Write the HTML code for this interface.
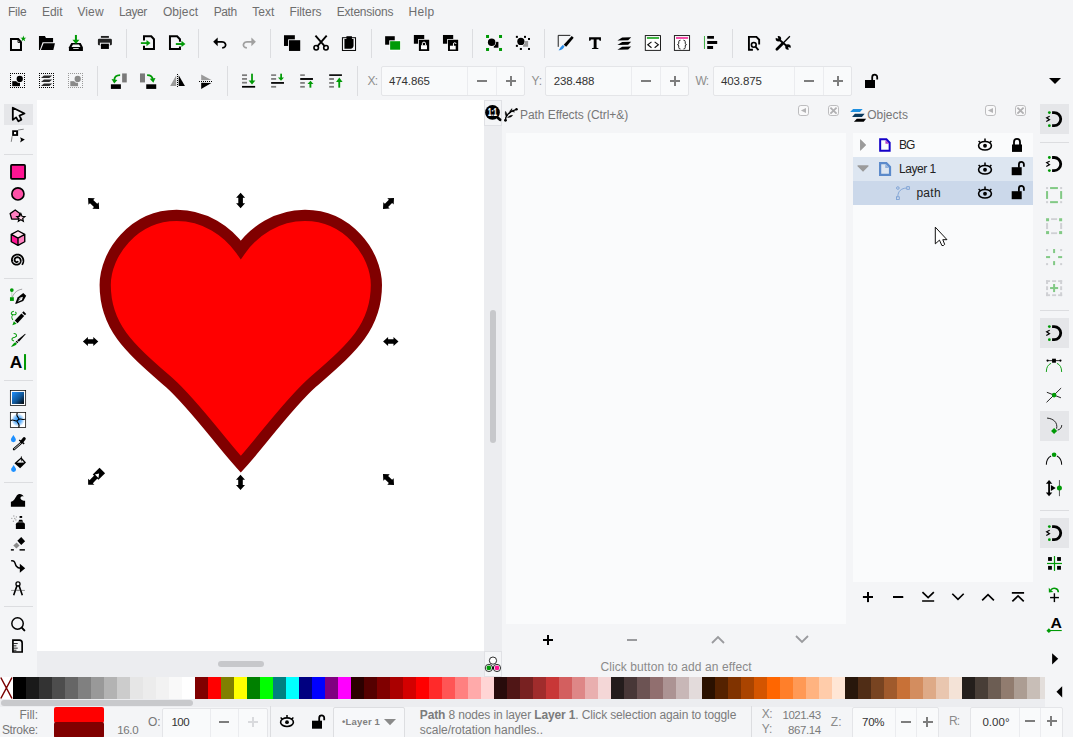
<!DOCTYPE html>
<html lang="en"><head><meta charset="utf-8"><title>Inkscape</title><style>
html,body{margin:0;padding:0}
body{width:1073px;height:737px;overflow:hidden;background:#f4f5f7;font-family:"Liberation Sans",sans-serif;position:relative}
.a{position:absolute;display:block}
.t{white-space:pre}
.pal i{display:block;flex:0 0 13px;height:22px}
.pal{overflow:hidden;display:flex !important;flex-wrap:nowrap}
</style></head>
<body>
<span class="a t" id="t_File_8_5_16" style="top:3.84px;font-size:12px;color:#6e6e6e;line-height:16px;left:7.90px;letter-spacing:-0.215px;">File</span>
<span class="a t" id="t_Edit_42_5_16" style="top:3.84px;font-size:12px;color:#6e6e6e;line-height:16px;left:41.90px;letter-spacing:0.004px;">Edit</span>
<span class="a t" id="t_View_78_16" style="top:3.84px;font-size:12px;color:#6e6e6e;line-height:16px;left:77.40px;letter-spacing:0.134px;">View</span>
<span class="a t" id="t_Layer_119_5_16" style="top:3.84px;font-size:12px;color:#6e6e6e;line-height:16px;left:118.90px;letter-spacing:-0.408px;">Layer</span>
<span class="a t" id="t_Object_163_5_16" style="top:3.84px;font-size:12px;color:#6e6e6e;line-height:16px;left:162.90px;letter-spacing:0.103px;">Object</span>
<span class="a t" id="t_Path_214_4_16" style="top:3.84px;font-size:12px;color:#6e6e6e;line-height:16px;left:213.80px;letter-spacing:-0.463px;">Path</span>
<span class="a t" id="t_Text_252_9_16" style="top:3.84px;font-size:12px;color:#6e6e6e;line-height:16px;left:252.30px;letter-spacing:0.028px;">Text</span>
<span class="a t" id="t_Filters_290_16" style="top:3.84px;font-size:12px;color:#6e6e6e;line-height:16px;left:289.40px;letter-spacing:-0.079px;">Filters</span>
<span class="a t" id="t_Extensions_337_4_16" style="top:3.84px;font-size:12px;color:#6e6e6e;line-height:16px;left:336.80px;letter-spacing:-0.234px;">Extensions</span>
<span class="a t" id="t_Help_409_16" style="top:3.84px;font-size:12px;color:#6e6e6e;line-height:16px;left:408.40px;letter-spacing:0.371px;">Help</span>
<div class="a" style="left:126px;top:29px;width:1px;height:29px;background:#dcdde0;"></div>
<div class="a" style="left:198px;top:29px;width:1px;height:29px;background:#dcdde0;"></div>
<div class="a" style="left:270px;top:29px;width:1px;height:29px;background:#dcdde0;"></div>
<div class="a" style="left:371px;top:29px;width:1px;height:29px;background:#dcdde0;"></div>
<div class="a" style="left:472px;top:29px;width:1px;height:29px;background:#dcdde0;"></div>
<div class="a" style="left:544px;top:29px;width:1px;height:29px;background:#dcdde0;"></div>
<div class="a" style="left:732px;top:29px;width:1px;height:29px;background:#dcdde0;"></div>
<div class="a" style="left:97px;top:66px;width:1px;height:30px;background:#dcdde0;"></div>
<div class="a" style="left:227px;top:66px;width:1px;height:30px;background:#dcdde0;"></div>
<div class="a" style="left:357px;top:66px;width:1px;height:30px;background:#dcdde0;"></div>
<span class="a t" id="t_X__368_85" style="top:72.84px;font-size:12px;color:#8e8e8e;line-height:16px;left:367.40px;letter-spacing:-0.544px;">X:</span>
<div class="a" style="left:381px;top:66px;width:144px;height:30px;background:#f9fafb;border:1px solid #e4e5e8;box-sizing:border-box;border-radius:2px;"></div>
<div class="a" style="left:467px;top:67px;width:1px;height:28px;background:#ebecef;"></div>
<div class="a" style="left:496px;top:67px;width:1px;height:28px;background:#ebecef;"></div>
<div class="a" style="left:477.0px;top:80px;width:10px;height:2px;background:#7d7d7d;"></div>
<div class="a" style="left:506.0px;top:80px;width:10px;height:2px;background:#7d7d7d;"></div>
<div class="a" style="left:510px;top:76px;width:2px;height:10px;background:#7d7d7d;"></div>
<span class="a t" id="t_474_865_389_7_85" style="top:73.02px;font-size:11.5px;color:#333;line-height:16px;left:389.10px;letter-spacing:-0.146px;">474.865</span>
<span class="a t" id="t_Y__532_85" style="top:72.84px;font-size:12px;color:#8e8e8e;line-height:16px;left:531.40px;letter-spacing:-0.088px;">Y:</span>
<div class="a" style="left:545px;top:66px;width:144px;height:30px;background:#f9fafb;border:1px solid #e4e5e8;box-sizing:border-box;border-radius:2px;"></div>
<div class="a" style="left:631px;top:67px;width:1px;height:28px;background:#ebecef;"></div>
<div class="a" style="left:660px;top:67px;width:1px;height:28px;background:#ebecef;"></div>
<div class="a" style="left:641.0px;top:80px;width:10px;height:2px;background:#7d7d7d;"></div>
<div class="a" style="left:670.0px;top:80px;width:10px;height:2px;background:#7d7d7d;"></div>
<div class="a" style="left:674px;top:76px;width:2px;height:10px;background:#7d7d7d;"></div>
<span class="a t" id="t_238_488_554_3_85" style="top:73.02px;font-size:11.5px;color:#333;line-height:16px;left:553.70px;letter-spacing:-0.146px;">238.488</span>
<span class="a t" id="t_W__696_85" style="top:72.84px;font-size:12px;color:#8e8e8e;line-height:16px;left:695.40px;letter-spacing:-0.753px;">W:</span>
<div class="a" style="left:713px;top:66px;width:139px;height:30px;background:#f9fafb;border:1px solid #e4e5e8;box-sizing:border-box;border-radius:2px;"></div>
<div class="a" style="left:794px;top:67px;width:1px;height:28px;background:#ebecef;"></div>
<div class="a" style="left:823px;top:67px;width:1px;height:28px;background:#ebecef;"></div>
<div class="a" style="left:804.0px;top:80px;width:10px;height:2px;background:#7d7d7d;"></div>
<div class="a" style="left:833.0px;top:80px;width:10px;height:2px;background:#7d7d7d;"></div>
<div class="a" style="left:837px;top:76px;width:2px;height:10px;background:#7d7d7d;"></div>
<span class="a t" id="t_403_875_721_7_85" style="top:73.02px;font-size:11.5px;color:#333;line-height:16px;left:721.10px;letter-spacing:-0.146px;">403.875</span>
<svg class="a" style="left:1048px;top:77px" width="14" height="8"><path d="M1 1h12l-6 6z" fill="#000"/></svg>
<div class="a" style="left:4px;top:104px;width:29px;height:21px;background:#e5e6e9;"></div>
<div class="a" style="left:4px;top:154px;width:29px;height:1px;background:#dcdde0;"></div>
<div class="a" style="left:4px;top:278px;width:29px;height:1px;background:#dcdde0;"></div>
<div class="a" style="left:4px;top:380px;width:29px;height:1px;background:#dcdde0;"></div>
<div class="a" style="left:4px;top:482px;width:29px;height:1px;background:#dcdde0;"></div>
<div class="a" style="left:4px;top:606px;width:29px;height:1px;background:#dcdde0;"></div>
<div class="a" style="left:37px;top:100px;width:447px;height:551px;background:#fff;"></div>
<div class="a" style="left:484px;top:100px;width:18px;height:577px;background:#ecedf0;"></div>
<div class="a" style="left:37px;top:651px;width:465px;height:26px;background:#ecedf0;"></div>
<div class="a" style="left:484px;top:100px;width:18px;height:26px;background:#f4f5f7;border:1px solid #e0e1e5;box-sizing:border-box;"></div>
<div class="a" style="left:490px;top:310px;width:6px;height:132.5px;background:#c7c8cb;border-radius:3px;"></div>
<div class="a" style="left:218px;top:661px;width:46.3px;height:6px;background:#c7c8cb;border-radius:3px;"></div>
<div class="a" style="left:484px;top:651px;width:18px;height:26px;background:#f4f5f7;border:1px solid #e0e1e5;box-sizing:border-box;"></div>
<svg class="a" style="left:37px;top:100px" width="447" height="551" viewBox="37 100 447 551"><path d="M240.8,464.2 C221.5,443.4 194.5,405.3 169.6,382.9 C131.6,349.5 105.2,328.4 105.2,285.0 C105.2,253.4 133.9,215.4 176.6,215.4 C205.0,215.4 227.6,231.1 240.8,249.8 C254.0,231.1 276.6,215.4 305.0,215.4 C347.7,215.4 376.4,253.4 376.4,285.0 C376.4,328.4 350.0,349.5 312.0,382.9 C287.1,405.3 260.1,443.4 240.8,464.2 Z" fill="#ff0000" stroke="#800000" stroke-width="11.2" stroke-miterlimit="10"/></svg>
<span class="a t" id="t_pe" style="top:106.84px;font-size:12px;color:#777;line-height:16px;left:520.00px;letter-spacing:-0.064px;">Path Effects (Ctrl+&amp;)</span>
<svg class="a" style="left:798px;top:105px" width="11" height="11"><rect x="0.5" y="0.5" width="10" height="10" rx="2.3" fill="#f9f9fa" stroke="#b6b6b8" stroke-width="0.9"/><path d="M8 3.1v4.9L2.9 5.5z" fill="#b4b4b6"/></svg>
<svg class="a" style="left:828px;top:105px" width="11" height="11"><rect x="0.5" y="0.5" width="10" height="10" rx="2.3" fill="#f9f9fa" stroke="#b6b6b8" stroke-width="0.9"/><path d="M2.4 2.6l6.2 6M8.6 2.6l-6.2 6" stroke="#b0b0b2" stroke-width="1.8" fill="none"/></svg>
<div class="a" style="left:506px;top:133px;width:340px;height:491px;background:#fafbfc;"></div>
<div class="a" style="left:542.5px;top:639.0px;width:10px;height:2px;background:#000;"></div>
<div class="a" style="left:546.5px;top:635px;width:2px;height:10px;background:#000;"></div>
<div class="a" style="left:627px;top:639px;width:10px;height:2px;background:#9a9b9e;"></div>
<svg class="a" style="left:710px;top:634px" width="16" height="12"><path d="M2 9l6-6 6 6" fill="none" stroke="#9a9b9e" stroke-width="1.8"/></svg>
<svg class="a" style="left:794px;top:633px" width="16" height="12"><path d="M2 3l6 6 6-6" fill="none" stroke="#9a9b9e" stroke-width="1.8"/></svg>
<span class="a t" id="t_click" style="top:658.84px;font-size:12px;color:#8a8a8a;line-height:16px;left:600.40px;letter-spacing:0.095px;">Click button to add an effect</span>
<span class="a t" id="t_Objects_867_8_119" style="top:106.84px;font-size:12px;color:#777;line-height:16px;left:867.20px;letter-spacing:0.002px;">Objects</span>
<svg class="a" style="left:985px;top:105px" width="11" height="11"><rect x="0.5" y="0.5" width="10" height="10" rx="2.3" fill="#f9f9fa" stroke="#b6b6b8" stroke-width="0.9"/><path d="M8 3.1v4.9L2.9 5.5z" fill="#b4b4b6"/></svg>
<svg class="a" style="left:1015px;top:105px" width="11" height="11"><rect x="0.5" y="0.5" width="10" height="10" rx="2.3" fill="#f9f9fa" stroke="#b6b6b8" stroke-width="0.9"/><path d="M2.4 2.6l6.2 6M8.6 2.6l-6.2 6" stroke="#b0b0b2" stroke-width="1.8" fill="none"/></svg>
<div class="a" style="left:853px;top:133px;width:180px;height:448.6px;background:#fafbfc;"></div>
<div class="a" style="left:853px;top:157px;width:180px;height:24px;background:#dde6f1;"></div>
<div class="a" style="left:853px;top:181px;width:180px;height:24px;background:#cbd8ea;"></div>
<svg class="a" style="left:859px;top:138px" width="8" height="14"><path d="M1.2 1.2v11.6L7 7z" fill="#9b9b9b"/></svg>
<svg class="a" style="left:856px;top:164px" width="14" height="8"><path d="M1.2 1.2h11.6L7 7z" fill="#9b9b9b"/></svg>
<span class="a t" id="t_BG_899_6_149" style="top:136.84px;font-size:12px;color:#222;line-height:16px;left:899.00px;letter-spacing:-1.100px;">BG</span>
<span class="a t" id="t_Layer_1_899_6_173" style="top:160.84px;font-size:12px;color:#222;line-height:16px;left:899.00px;letter-spacing:-0.472px;">Layer 1</span>
<span class="a t" id="t_path_917_197" style="top:184.84px;font-size:12px;color:#222;line-height:16px;left:916.40px;letter-spacing:0.280px;">path</span>
<div class="a" style="left:863px;top:596.0px;width:10px;height:2px;background:#000;"></div>
<div class="a" style="left:867.0px;top:592px;width:2px;height:10px;background:#000;"></div>
<div class="a" style="left:893px;top:596px;width:10px;height:2px;background:#000;"></div>
<div class="a" style="left:1040px;top:104px;width:29px;height:30px;background:#e5e6e9;"></div>
<div class="a" style="left:1040px;top:318px;width:29px;height:30px;background:#e5e6e9;"></div>
<div class="a" style="left:1040px;top:411px;width:29px;height:30px;background:#e5e6e9;"></div>
<div class="a" style="left:1040px;top:518px;width:29px;height:30px;background:#e5e6e9;"></div>
<div class="a" style="left:1040px;top:142px;width:29px;height:1px;background:#dcdde0;"></div>
<div class="a" style="left:1040px;top:310px;width:29px;height:1px;background:#dcdde0;"></div>
<div class="a" style="left:1040px;top:510px;width:29px;height:1px;background:#dcdde0;"></div>
<div class="a" style="left:0px;top:676.5px;width:1045px;height:30px;background:#ecedf0;"></div>
<div class="a pal" style="left:13px;top:677px;width:1032px;height:22px"><i style="background:#000000"></i><i style="background:#1a1a1a"></i><i style="background:#333333"></i><i style="background:#4d4d4d"></i><i style="background:#666666"></i><i style="background:#808080"></i><i style="background:#999999"></i><i style="background:#b3b3b3"></i><i style="background:#cccccc"></i><i style="background:#e6e6e6"></i><i style="background:#ececec"></i><i style="background:#f2f2f2"></i><i style="background:#f9f9f9"></i><i style="background:#ffffff"></i><i style="background:#800000"></i><i style="background:#ff0000"></i><i style="background:#808000"></i><i style="background:#ffff00"></i><i style="background:#008000"></i><i style="background:#00ff00"></i><i style="background:#008080"></i><i style="background:#00ffff"></i><i style="background:#000080"></i><i style="background:#0000ff"></i><i style="background:#800080"></i><i style="background:#ff00ff"></i><i style="background:#2b0000"></i><i style="background:#550000"></i><i style="background:#800000"></i><i style="background:#aa0000"></i><i style="background:#d40000"></i><i style="background:#ff0000"></i><i style="background:#ff2a2a"></i><i style="background:#ff5555"></i><i style="background:#ff8080"></i><i style="background:#ffaaaa"></i><i style="background:#ffd5d5"></i><i style="background:#280b0b"></i><i style="background:#501616"></i><i style="background:#782121"></i><i style="background:#a02c2c"></i><i style="background:#c83737"></i><i style="background:#d35f5f"></i><i style="background:#de8787"></i><i style="background:#e9afaf"></i><i style="background:#f4d7d7"></i><i style="background:#241c1c"></i><i style="background:#483737"></i><i style="background:#6c5353"></i><i style="background:#916f6f"></i><i style="background:#ac9393"></i><i style="background:#c8b7b7"></i><i style="background:#e3dbdb"></i><i style="background:#2b1100"></i><i style="background:#552200"></i><i style="background:#803300"></i><i style="background:#aa4400"></i><i style="background:#d45500"></i><i style="background:#ff6600"></i><i style="background:#ff7f2a"></i><i style="background:#ff9955"></i><i style="background:#ffb380"></i><i style="background:#ffccaa"></i><i style="background:#ffe6d5"></i><i style="background:#28170b"></i><i style="background:#502d16"></i><i style="background:#784421"></i><i style="background:#a05a2c"></i><i style="background:#c87137"></i><i style="background:#d38d5f"></i><i style="background:#deaa87"></i><i style="background:#e9c6af"></i><i style="background:#f4e3d7"></i><i style="background:#241f1c"></i><i style="background:#483e37"></i><i style="background:#6c5d53"></i><i style="background:#917c6f"></i><i style="background:#ac9d93"></i><i style="background:#c8beb7"></i><i style="background:#e3dedb"></i></div>
<svg class="a" style="left:0;top:677px" width="13" height="22"><rect width="13" height="22" fill="#fff"/><path d="M0.8 0.5L12 21.5M12 0.5L0.8 21.5" stroke="#7a0000" stroke-width="1.5"/></svg>
<div class="a" style="left:1px;top:700px;width:192px;height:6px;background:#c8c9cc;border-radius:3px;"></div>
<span class="a t" id="t_Fill__20_719" style="top:706.84px;font-size:12px;color:#777;line-height:16px;left:19.40px;letter-spacing:0.007px;">Fill:</span>
<span class="a t" id="t_Stroke__2_5_734" style="top:721.84px;font-size:12px;color:#777;line-height:16px;left:1.90px;letter-spacing:-0.303px;">Stroke:</span>
<div class="a" style="left:54px;top:707px;width:50px;height:15.5px;background:#ff0000;border-radius:2px;"></div>
<div class="a" style="left:54px;top:722px;width:50px;height:16px;background:#800000;border-radius:2px;"></div>
<span class="a t" id="t_16_0_117_8_734" style="top:722.02px;font-size:11.5px;color:#777;line-height:16px;left:117.20px;letter-spacing:-0.330px;">16.0</span>
<span class="a t" id="t_O__148_5_726" style="top:713.84px;font-size:12px;color:#777;line-height:16px;left:147.90px;letter-spacing:0.028px;">O:</span>
<div class="a" style="left:162px;top:707.5px;width:105.5px;height:37.5px;background:#f9fafb;border:1px solid #e4e5e8;box-sizing:border-box;border-radius:2px;"></div>
<div class="a" style="left:209.5px;top:708.5px;width:1px;height:35.5px;background:#ebecef;"></div>
<div class="a" style="left:238px;top:708.5px;width:1px;height:35.5px;background:#ebecef;"></div>
<div class="a" style="left:219.25px;top:721px;width:10px;height:2px;background:#7d7d7d;"></div>
<div class="a" style="left:248.25px;top:721px;width:10px;height:2px;background:#d9dadd;"></div>
<div class="a" style="left:252px;top:717px;width:2px;height:10px;background:#d9dadd;"></div>
<span class="a t" id="t_100_172_726" style="top:714.02px;font-size:11.5px;color:#333;line-height:16px;left:171.40px;letter-spacing:-0.494px;">100</span>
<div class="a" style="left:270px;top:706px;width:1px;height:31px;background:#dcdde0;"></div>
<div class="a" style="left:332.5px;top:707px;width:72px;height:40px;background:#f7f8fa;border:1px solid #dddee1;box-sizing:border-box;border-radius:2px;"></div>
<span class="a t" id="t_layersel" style="top:713.91px;font-size:9.5px;color:#808080;line-height:16px;left:342.00px;font-weight:bold;letter-spacing:0.184px;">•Layer 1</span>
<svg class="a" style="left:383px;top:718px" width="14" height="8"><path d="M1 1h12l-6 6.3z" fill="#8a8a8a"/></svg>
<span class="a t" id="t_status1" style="top:706.64px;font-size:12px;color:#7b7b7b;line-height:16px;left:419.80px;letter-spacing:-0.137px;"><b>Path</b> 8 nodes in layer <b>Layer 1</b>. Click selection again to toggle</span>
<span class="a t" id="t_status2" style="top:721.64px;font-size:12px;color:#7b7b7b;line-height:16px;left:419.80px;letter-spacing:-0.010px;">scale/rotation handles..</span>
<div class="a" style="left:751px;top:706px;width:1px;height:31px;background:#dcdde0;"></div>
<span class="a t" id="t_cx" style="top:706.34px;font-size:12px;color:#8a8a8a;line-height:16px;left:761.80px;letter-spacing:-0.544px;">X:</span>
<span class="a t" id="t_cy" style="top:721.34px;font-size:12px;color:#8a8a8a;line-height:16px;left:761.80px;letter-spacing:-0.088px;">Y:</span>
<span class="a t" id="t_1021_43_783_2_718_5" style="top:706.52px;font-size:11.5px;color:#7b7b7b;line-height:16px;left:782.60px;letter-spacing:-0.513px;">1021.43</span>
<span class="a t" id="t_867_14_788_5_733_5" style="top:721.52px;font-size:11.5px;color:#7b7b7b;line-height:16px;left:787.90px;letter-spacing:-0.397px;">867.14</span>
<span class="a t" id="t_Z__831_3_726" style="top:713.84px;font-size:12px;color:#8a8a8a;line-height:16px;left:830.70px;letter-spacing:0.228px;">Z:</span>
<div class="a" style="left:852px;top:707.3px;width:86.5px;height:37.700000000000045px;background:#f9fafb;border:1px solid #e4e5e8;box-sizing:border-box;border-radius:2px;"></div>
<div class="a" style="left:894.5px;top:708.3px;width:1px;height:35.700000000000045px;background:#ebecef;"></div>
<div class="a" style="left:915.5px;top:708.3px;width:1px;height:35.700000000000045px;background:#ebecef;"></div>
<div class="a" style="left:900.5px;top:721px;width:10px;height:2px;background:#7d7d7d;"></div>
<div class="a" style="left:922.5px;top:721px;width:10px;height:2px;background:#7d7d7d;"></div>
<div class="a" style="left:926px;top:717px;width:2px;height:10px;background:#7d7d7d;"></div>
<span class="a t" id="t_70__862_6_726" style="top:714.02px;font-size:11.5px;color:#333;line-height:16px;left:862.00px;letter-spacing:-0.216px;">70%</span>
<span class="a t" id="t_R__949_7_725_5" style="top:713.34px;font-size:12px;color:#8a8a8a;line-height:16px;left:949.10px;letter-spacing:-1.100px;">R:</span>
<div class="a" style="left:969.5px;top:707.3px;width:93.0px;height:37.700000000000045px;background:#f9fafb;border:1px solid #e4e5e8;box-sizing:border-box;border-radius:2px;"></div>
<div class="a" style="left:1018.5px;top:708.3px;width:1px;height:35.700000000000045px;background:#ebecef;"></div>
<div class="a" style="left:1039.5px;top:708.3px;width:1px;height:35.700000000000045px;background:#ebecef;"></div>
<div class="a" style="left:1024.5px;top:720px;width:10px;height:2px;background:#7d7d7d;"></div>
<div class="a" style="left:1046.5px;top:720px;width:10px;height:2px;background:#7d7d7d;"></div>
<div class="a" style="left:1050px;top:716px;width:2px;height:10px;background:#7d7d7d;"></div>
<span class="a t" id="t_0_00__983_725_5" style="top:713.52px;font-size:11.5px;color:#333;line-height:16px;left:982.40px;letter-spacing:0.054px;">0.00°</span>
<svg class="a" style="left:0;top:0" width="1073" height="737" viewBox="0 0 1073 737"><g transform="translate(0 0) scale(0.12488)"><path d="M88,313 H146 L168,337 V400 H88 Z" fill="none" stroke="#000" stroke-width="16" /><path d="M144,311 V340 H170" fill="none" stroke="#000" stroke-width="7" /><polygon points="187.0,285.0 192.9,301.9 210.8,302.3 196.5,313.1 201.7,330.2 187.0,320.0 172.3,330.2 177.5,313.1 163.2,302.3 181.1,301.9" fill="#009a06" /><polygon points="312,288 360,288 368,305 425,305 425,338 341,338 319,400 312,400" fill="#000" /><polygon points="349,346 440,346 427,400 327,400" fill="#000" /><polygon points="571,345 646,345 664,378 664,408 552,408 552,378" fill="#000" /><polygon points="584,356 633,356 644,376 573,376" fill="#f4f5f7" /><rect x="586" y="385" width="44" height="7" fill="#f4f5f7" /><rect x="600" y="280" width="16" height="46" fill="#009a06" /><polygon points="580,318 636,318 608,352" fill="#009a06" /><rect x="808" y="288" width="64" height="15" fill="#222" /><rect x="784" y="310" width="112" height="52" fill="#222" rx="10"/><rect x="800" y="342" width="80" height="22" fill="#f4f5f7" /><rect x="808" y="350" width="64" height="42" fill="#000" /><path d="M80 588h8M80 700h8M96 588h8M96 700h8M112 588h8M112 700h8M128 588h8M128 700h8M144 588h8M144 700h8M160 588h8M160 700h8M176 588h8M176 700h8M192 588h8M192 700h8M80 604h8M192 604h8M80 620h8M192 620h8M80 636h8M192 636h8M80 652h8M192 652h8M80 668h8M192 668h8M80 684h8M192 684h8" fill="none" stroke="#000" stroke-width="8" shape-rendering="crispEdges"/><rect x="98" y="650" width="62" height="40" fill="#000" /><circle cx="158" cy="632" r="25" fill="#000" stroke="#f4f5f7" stroke-width="12" paint-order="stroke"/><path d="M312 588h8M312 700h8M328 588h8M328 700h8M344 588h8M344 700h8M360 588h8M360 700h8M376 588h8M376 700h8M392 588h8M392 700h8M408 588h8M408 700h8M424 588h8M424 700h8M312 604h8M424 604h8M312 620h8M424 620h8M312 636h8M424 636h8M312 652h8M424 652h8M312 668h8M424 668h8M312 684h8M424 684h8" fill="none" stroke="#000" stroke-width="8" shape-rendering="crispEdges"/><polygon points="352,605 418,605 395,625 328,625" fill="#2a2a2a" /><polygon points="352,636 418,636 395,656 328,656" fill="#2a2a2a" /><polygon points="352,668 418,668 395,688 328,688" fill="#2a2a2a" /><path d="M544 588h8M544 700h8M560 588h8M560 700h8M576 588h8M576 700h8M592 588h8M592 700h8M608 588h8M608 700h8M624 588h8M624 700h8M640 588h8M640 700h8M656 588h8M656 700h8M544 604h8M656 604h8M544 620h8M656 620h8M544 636h8M656 636h8M544 652h8M656 652h8M544 668h8M656 668h8M544 684h8M656 684h8" fill="none" stroke="#999" stroke-width="8" shape-rendering="crispEdges"/><rect x="563" y="650" width="62" height="40" fill="#8a8a8a" /><circle cx="622" cy="632" r="25" fill="#8a8a8a" stroke="#f4f5f7" stroke-width="12" paint-order="stroke"/><rect x="978" y="588" width="37" height="72" fill="#7a7a7a" /><rect x="888" y="675" width="80" height="37" fill="#000" /><path d="M962,602 C930,602 915,622 915,645" fill="none" stroke="#009a06" stroke-width="14" /><polygon points="893,632 940,640 915,668" fill="#009a06" /></g>
<g transform="translate(134 0) scale(0.12488)"><path d="M80,324 V290 H138 L160,314 V392 H80 V366" fill="none" stroke="#000" stroke-width="16" /><rect x="55" y="338" width="53" height="14" fill="#009a06" /><polygon points="100,320 132,345 100,370" fill="#009a06" /><path d="M368,334 V314 L345,290 H288 V392 H368 V372" fill="none" stroke="#000" stroke-width="16" /><rect x="335" y="345" width="53" height="15" fill="#009a06" /><polygon points="380,327 412,352 380,377" fill="#009a06" /><path d="M655,335 H705 C730,335 740,358 730,372 C724,380 716,383 706,384" fill="none" stroke="#000" stroke-width="14" /><polygon points="634,335 670,300 670,370" fill="#000" /><path d="M955,335 H905 C880,335 870,358 880,372 C886,380 894,383 904,384" fill="none" stroke="#a0a0a0" stroke-width="14" /><polygon points="976,335 940,300 940,370" fill="#a0a0a0" /><rect x="48" y="588" width="40" height="72" fill="#7a7a7a" /><rect x="98" y="675" width="80" height="37" fill="#000" /><path d="M105,602 C135,602 150,620 150,642" fill="none" stroke="#009a06" stroke-width="14" /><polygon points="126,630 172,624 155,662" fill="#009a06" /><polygon points="290,688 338,688 338,602" fill="#9a9a9a" /><polygon points="358,602 358,688 408,688" fill="#000" /><path d="M348,592 V706" fill="none" stroke="#000" stroke-width="8" stroke-dasharray="8 8" shape-rendering="crispEdges"/><polygon points="538,596 620,640 538,642" fill="#9a9a9a" /><polygon points="538,662 620,664 538,712" fill="#000" /><path d="M520,652 H636" fill="none" stroke="#000" stroke-width="8" stroke-dasharray="8 8" shape-rendering="crispEdges"/><rect x="865" y="595" width="40" height="14" fill="#7a7a7a" /><rect x="865" y="625" width="40" height="14" fill="#7a7a7a" /><rect x="865" y="655" width="40" height="14" fill="#7a7a7a" /><rect x="865" y="688" width="105" height="14" fill="#000" /><rect x="938" y="590" width="14" height="60" fill="#009a06" /><polygon points="918,645 972,645 945,676" fill="#009a06" /></g>
<g transform="translate(268 0) scale(0.12488)"><rect x="128" y="282" width="87" height="86" fill="#000" /><rect x="168" y="322" width="90" height="86" fill="#000" stroke="#f4f5f7" stroke-width="14" paint-order="stroke"/><path d="M380,286 L457,374 M470,286 L393,374" fill="none" stroke="#000" stroke-width="15" /><circle cx="386" cy="382" r="18" fill="none" stroke="#000" stroke-width="13"/><circle cx="464" cy="382" r="18" fill="none" stroke="#000" stroke-width="13"/><rect x="596" y="302" width="105" height="102" fill="#f4f5f7" stroke="#000" stroke-width="8"/><rect x="628" y="290" width="44" height="24" fill="#000" /><path d="M612,312 H685 V365 Q685,390 660,390 H612 Z" fill="#000" stroke="none" stroke-width="0" /><rect x="938" y="290" width="77" height="68" fill="#000" /><rect x="978" y="330" width="80" height="68" fill="#009a06" stroke="#fff" stroke-width="14" paint-order="stroke"/><rect x="25" y="595" width="40" height="13" fill="#7a7a7a" /><rect x="25" y="625" width="40" height="14" fill="#7a7a7a" /><rect x="25" y="688" width="40" height="14" fill="#7a7a7a" /><rect x="25" y="657" width="103" height="14" fill="#000" /><rect x="98" y="590" width="14" height="36" fill="#009a06" /><polygon points="80,620 128,620 104,646" fill="#009a06" /><rect x="258" y="595" width="37" height="13" fill="#7a7a7a" /><rect x="258" y="657" width="37" height="14" fill="#7a7a7a" /><rect x="258" y="688" width="37" height="14" fill="#7a7a7a" /><rect x="258" y="625" width="102" height="15" fill="#000" /><rect x="332" y="668" width="15" height="34" fill="#009a06" /><polygon points="316,673 364,673 340,647" fill="#009a06" /><rect x="490" y="595" width="102" height="13" fill="#000" /><rect x="490" y="625" width="38" height="15" fill="#7a7a7a" /><rect x="490" y="657" width="38" height="14" fill="#7a7a7a" /><rect x="490" y="688" width="38" height="14" fill="#7a7a7a" /><rect x="563" y="650" width="15" height="52" fill="#009a06" /><polygon points="545,656 597,656 571,621" fill="#009a06" /></g>
<g transform="translate(402 20) scale(0.12488)"><rect x="95" y="120" width="83" height="70" fill="#000" /><rect x="135" y="158" width="83" height="90" fill="#000" stroke="#fff" stroke-width="12" paint-order="stroke"/><rect x="152" y="202" width="48" height="32" fill="#fff" /><path d="M163,204 V190 A13,13 0 0 1 189,190 V204" fill="none" stroke="#fff" stroke-width="8" /><rect x="328" y="120" width="82" height="70" fill="#000" /><rect x="368" y="158" width="82" height="90" fill="#000" stroke="#fff" stroke-width="12" paint-order="stroke"/><rect x="384" y="206" width="46" height="30" fill="#fff" /><path d="M412,208 V192 A10,10 0 0 1 432,192" fill="none" stroke="#fff" stroke-width="8" /><rect x="673" y="120" width="24" height="24" fill="#009a06" /><rect x="777" y="120" width="24" height="24" fill="#009a06" /><rect x="673" y="224" width="24" height="24" fill="#009a06" /><rect x="777" y="224" width="24" height="24" fill="#009a06" /><rect x="735" y="175" width="37" height="47" fill="#000" /><circle cx="718" cy="178" r="30" fill="#000" stroke="#fff" stroke-width="12" paint-order="stroke"/><polygon points="978,168 1010,168 1010,215 968,215" fill="#9a9a9a" /><circle cx="952" cy="172" r="29" fill="#000" stroke="#fff" stroke-width="10" paint-order="stroke"/><rect x="912" y="127" width="16" height="16" fill="#000" /><rect x="977" y="127" width="16" height="16" fill="#000" /><rect x="912" y="199" width="16" height="16" fill="#000" /><rect x="1009" y="144" width="16" height="16" fill="#000" /><rect x="944" y="224" width="16" height="16" fill="#000" /><rect x="1009" y="224" width="16" height="16" fill="#000" /></g>
<g transform="translate(536 20) scale(0.12488)"><path d="M178,215 V123 H275" fill="none" stroke="#000" stroke-width="7" /><polygon points="286,128 302,142 242,214 222,198" fill="#000" /><path d="M228,208 C226,226 205,243 180,242 C190,233 196,214 214,200 Z" fill="#2b8de8" stroke="none" stroke-width="0" /><polygon points="425,138 520,138 520,166 510,166 505,156 485,156 485,222 500,226 500,233 448,233 448,226 462,222 462,156 440,156 435,166 425,166" fill="#000" /><polygon points="690,140 762,138 738,162 652,164" fill="#000" /><polygon points="690,177 762,175 738,199 652,201" fill="#000" /><polygon points="690,214 762,212 738,236 652,238" fill="#000" /><rect x="875" y="125" width="122" height="118" fill="#fff" stroke="#000" stroke-width="7"/><rect x="888" y="138" width="97" height="12" fill="#009a06" /><path d="M925,175 L895,198 L925,222 M950,175 L980,198 L950,222" fill="none" stroke="#111" stroke-width="9" /></g>
<g transform="translate(670 20) scale(0.12488)"><rect x="35" y="125" width="122" height="118" fill="#fff" stroke="#000" stroke-width="7"/><rect x="48" y="138" width="97" height="12" fill="#f0148c" /><path d="M84,162 Q70,162 70,174 V186 Q70,196 60,197 Q70,198 70,208 V220 Q70,232 84,232" fill="none" stroke="#222" stroke-width="8" /><path d="M108,162 Q122,162 122,174 V186 Q122,196 132,197 Q122,198 122,208 V220 Q122,232 108,232" fill="none" stroke="#222" stroke-width="8" /><rect x="272" y="128" width="6" height="104" fill="#009a06" /><rect x="298" y="128" width="54" height="22" fill="#000" /><rect x="298" y="168" width="80" height="24" fill="#000" /><rect x="298" y="208" width="47" height="24" fill="#000" /><path d="M664,238 H632 V135 H692 L714,158 V196" fill="none" stroke="#000" stroke-width="15" /><circle cx="671" cy="199" r="19" fill="none" stroke="#000" stroke-width="13"/><path d="M686,216 L709,241" fill="none" stroke="#000" stroke-width="15" /><path d="M960,130 L905,186" fill="none" stroke="#000" stroke-width="11" /><path d="M900,190 L856,234" fill="none" stroke="#000" stroke-width="22" stroke-linecap="round"/><path d="M880,162 L935,208" fill="none" stroke="#000" stroke-width="16" /><circle cx="868" cy="150" r="22" fill="#000" /><polygon points="868,150 836,140 858,118" fill="#f4f5f7" /><circle cx="945" cy="216" r="22" fill="#000" /><polygon points="945,216 977,226 955,248" fill="#f4f5f7" /></g>
<g transform="translate(865 80)"><rect x="0" y="0" width="10" height="8" fill="#000"/><path d="M7.2,0.5 V-2.8 A2.5,2.5 0 0 1 12.2,-2.8 V-0.4" fill="none" stroke="#000" stroke-width="1.8"/></g>
<g transform="translate(1012 144.5)"><rect x="0" y="0" width="10" height="7.4" fill="#000"/><path d="M2,0.5 V-2.6 A3,3 0 0 1 8,-2.6 V0.5" fill="none" stroke="#000" stroke-width="1.8"/></g>
<g transform="translate(1011.7 167.2)"><rect x="0" y="0" width="10" height="8" fill="#000"/><path d="M7.2,0.5 V-2.8 A2.5,2.5 0 0 1 12.2,-2.8 V-0.4" fill="none" stroke="#000" stroke-width="1.8"/></g>
<g transform="translate(1011.7 191.2)"><rect x="0" y="0" width="10" height="8" fill="#000"/><path d="M7.2,0.5 V-2.8 A2.5,2.5 0 0 1 12.2,-2.8 V-0.4" fill="none" stroke="#000" stroke-width="1.8"/></g>
<g transform="translate(985 145.75)"><ellipse cx="0" cy="0" rx="6.4" ry="4.3" fill="none" stroke="#000" stroke-width="1.6"/><circle cx="0" cy="0" r="1.9" fill="#000"/><path d="M0,-7.3 V-4.2 M-6.4,-4.7 L-4.3,-2.7 M6.4,-4.7 L4.3,-2.7" stroke="#000" stroke-width="1.5" fill="none"/></g>
<g transform="translate(985 169.75)"><ellipse cx="0" cy="0" rx="6.4" ry="4.3" fill="none" stroke="#000" stroke-width="1.6"/><circle cx="0" cy="0" r="1.9" fill="#000"/><path d="M0,-7.3 V-4.2 M-6.4,-4.7 L-4.3,-2.7 M6.4,-4.7 L4.3,-2.7" stroke="#000" stroke-width="1.5" fill="none"/></g>
<g transform="translate(985 193.75)"><ellipse cx="0" cy="0" rx="6.4" ry="4.3" fill="none" stroke="#000" stroke-width="1.6"/><circle cx="0" cy="0" r="1.9" fill="#000"/><path d="M0,-7.3 V-4.2 M-6.4,-4.7 L-4.3,-2.7 M6.4,-4.7 L4.3,-2.7" stroke="#000" stroke-width="1.5" fill="none"/></g>
<g transform="translate(287 722.2)"><ellipse cx="0" cy="0" rx="6.4" ry="4.3" fill="none" stroke="#000" stroke-width="1.6"/><circle cx="0" cy="0" r="1.9" fill="#000"/><path d="M0,-7.3 V-4.2 M-6.4,-4.7 L-4.3,-2.7 M6.4,-4.7 L4.3,-2.7" stroke="#000" stroke-width="1.5" fill="none"/></g>
<g transform="translate(312 720.7)"><rect x="0" y="0" width="10" height="8" fill="#000"/><path d="M7.2,0.5 V-2.8 A2.5,2.5 0 0 1 12.2,-2.8 V-0.4" fill="none" stroke="#000" stroke-width="1.8"/></g>
<g transform="translate(0 100) scale(0.06244)"><path d="M205,124 V318 L258,278 L295,340 L342,314 L312,250 L392,216 Z" fill="#f4f5f7" stroke="#000" stroke-width="29" stroke-linejoin="round"/><rect x="195" y="485" width="95" height="90" fill="#000" /><rect x="225" y="513" width="33" height="34" fill="#fff" /><path d="M290,480 L380,468 M195,580 L180,670" fill="none" stroke="#111" stroke-width="8" /><polygon points="322,595 398,632 322,682 336,638" fill="#000" /></g>
<g transform="translate(0 158) scale(0.06244)"><rect x="176" y="112" width="225" height="224" fill="#ff1493" stroke="#000" stroke-width="28" rx="14"/><circle cx="287" cy="575" r="97" fill="#ff50a8" stroke="#000" stroke-width="26"/></g>
<g transform="translate(0 204) scale(0.09229)"><polygon points="165,65 216,102 197,163 126,163 110,104" fill="#ff80c0" stroke="#000" stroke-width="14" stroke-linejoin="round"/><polygon points="226.0,104.0 238.3,133.0 269.7,135.8 246.0,156.5 253.0,187.2 226.0,171.0 199.0,187.2 206.0,156.5 182.3,135.8 213.7,133.0" fill="#ffd9e8" stroke="#000" stroke-width="13" stroke-linejoin="miter" stroke-miterlimit="3"/><polygon points="195,292 266,330 195,370 124,330" fill="#ffe0ec" /><polygon points="124,330 195,370 195,446 124,408" fill="#ff1493" /><polygon points="266,330 195,370 195,446 266,408" fill="#ff80c0" /><path d="M195,290 L268,329 V409 L195,448 L122,409 V329 Z M122,329 L195,370 L268,329 M195,370 V448" fill="none" stroke="#000" stroke-width="15" stroke-linejoin="round"/><path d="M238.7,657.6 L242.4,652.2 L245.6,646.6 L248.3,640.8 L250.4,634.7 L251.9,628.6 L252.9,622.3 L253.3,616.1 L253.2,609.8 L252.5,603.7 L251.2,597.6 L249.4,591.8 L247.2,586.1 L244.4,580.7 L241.2,575.6 L237.5,570.9 L233.5,566.5 L229.1,562.6 L224.4,559.0 L219.5,556.0 L214.3,553.4 L208.9,551.3 L203.4,549.7 L197.9,548.6 L192.2,548.0 L186.6,547.9 L181.1,548.3 L175.6,549.3 L170.3,550.7 L165.2,552.5 L160.3,554.8 L155.6,557.5 L151.2,560.6 L147.2,564.1 L143.5,567.9 L140.2,571.9 L137.3,576.3 L134.8,580.8 L132.8,585.5 L131.2,590.3 L130.1,595.3 L129.4,600.2 L129.1,605.2 L129.3,610.1 L130.0,615.0 L131.0,619.7 L132.5,624.3 L134.4,628.8 L136.7,632.9 L139.3,636.9 L142.2,640.5 L145.4,643.9 L148.9,646.9 L152.6,649.6 L156.5,651.9 L160.6,653.8 L164.7,655.4 L169.0,656.5 L173.3,657.3 L177.7,657.6 L182.0,657.6 L186.2,657.2 L190.4,656.4 L194.4,655.2 L198.3,653.7 L202.0,651.9 L205.5,649.7 L208.7,647.3 L211.7,644.6 L214.4,641.7 L216.8,638.5 L218.9,635.2 L220.7,631.8 L222.1,628.2 L223.2,624.6 L224.0,620.9 L224.4,617.2 L224.4,613.5 L224.2,609.9 L223.6,606.3 L222.7,602.9 L221.5,599.5 L220.0,596.4 L218.3,593.4 L216.3,590.6 L214.1,588.0 L211.7,585.7 L209.1,583.6 L206.4,581.8 L203.6,580.2 L200.6,578.9 L197.6,578.0 L194.5,577.3 L191.5,576.9 L188.4,576.7 L185.4,576.9 L182.5,577.3 L179.6,578.0 L176.8,578.9 L174.2,580.1 L171.7,581.5 L169.4,583.0 L167.3,584.8 L165.3,586.7 L163.6,588.8 L162.1,591.0 L160.8,593.3 L159.8,595.6 L159.0,598.0 L158.4,600.5 L158.0,602.9 L157.9,605.3 L158.0,607.7 L158.3,610.1 L158.8,612.3 L159.6,614.5 L160.5,616.6 L161.5,618.5 L162.7,620.3 L164.1,621.9 L165.6,623.4 L167.2,624.8 L168.9,625.9 L170.6,626.9 L172.4,627.7 L174.2,628.3 L176.1,628.7 L177.9,628.9 L179.7,629.0 L181.5,628.9 L183.2,628.6 L184.9,628.2 L186.4,627.6 L187.9,627.0 L189.3,626.1 L190.6,625.2 L191.7,624.2 L192.7,623.1 L193.6,622.0 L194.3,620.8 L194.9,619.5" fill="none" stroke="#000" stroke-width="19.5" stroke-linecap="butt" stroke-linejoin="round"/></g>
<g transform="translate(0 282) scale(0.09229)"><path d="M128,100 V168" fill="none" stroke="#6cc46c" stroke-width="5" /><circle cx="128" cy="88" r="20" fill="#009a06" /><rect x="108" y="165" width="42" height="40" fill="#009a06" /><path d="M135,165 C150,110 200,82 240,78" fill="none" stroke="#444" stroke-width="5" /><polygon points="165,236 190,168 252,120 284,150 252,205 178,236" fill="#000" /><polygon points="190,215 215,172 248,160 238,195" fill="#f4f5f7" /><path d="M170,232 L222,180" fill="none" stroke="#000" stroke-width="6" /><path d="M150,318 C118,322 112,350 140,355 C175,360 185,335 165,325 M140,355 C120,375 130,400 140,410" fill="none" stroke="#009a06" stroke-width="11" /><polygon points="160,418 232,340 262,368 190,446" fill="#000" /><polygon points="240,332 256,318 284,346 270,360" fill="#000" /><polygon points="134,468 150,424 180,452" fill="#009a06" /><path d="M148,558 C185,560 190,590 160,598 C125,605 115,625 150,640" fill="none" stroke="#009a06" stroke-width="11" /><polygon points="272,560 278,566 205,648 186,630" fill="#000" /><polygon points="180,636 198,654 188,664 170,646" fill="#000" /><path d="M166,652 C150,660 135,680 118,702 C145,700 170,690 184,670 Z" fill="#009a06" stroke="none" stroke-width="0" /></g>
<g transform="translate(0 346) scale(0.09229)"><text x="106" y="240" font-family="Liberation Sans, sans-serif" font-weight="bold" font-size="170" fill="#000" textLength="136" lengthAdjust="spacingAndGlyphs">A</text><rect x="260" y="88" width="22" height="170" fill="#009a06" /><linearGradient id="gg" x1="0" y1="0" x2="1" y2="1"><stop offset="0" stop-color="#1e90ff"/><stop offset="0.55" stop-color="#0f5596"/><stop offset="1" stop-color="#000"/></linearGradient><rect x="112" y="482" width="166" height="164" fill="#fff" stroke="#000" stroke-width="8"/><rect x="130" y="498" width="130" height="130" fill="url(#gg)" /></g>
<g transform="translate(0 406) scale(0.09229)"><radialGradient id="mg"><stop offset="0" stop-color="#1e90ff"/><stop offset="0.5" stop-color="#6cb6fb"/><stop offset="1" stop-color="#fff"/></radialGradient><rect x="112" y="69" width="166" height="165" fill="#fff" stroke="#000" stroke-width="8"/><circle cx="195" cy="152" r="72" fill="url(#mg)" /><path d="M188,72 C160,120 230,130 195,152 C160,175 230,190 202,232 M114,162 C150,130 165,185 195,152 C225,120 245,165 276,140" fill="none" stroke="#000" stroke-width="11" /><path d="M145,315 C160,340 172,352 172,365 A27,27 0 0 1 118,365 C118,352 130,340 145,315 Z" fill="#1e90ff" stroke="none" stroke-width="0" /><path d="M226,402 L152,468" fill="none" stroke="#000" stroke-width="26" stroke-linecap="round"/><path d="M222,406 L156,464" fill="none" stroke="#f4f5f7" stroke-width="9" stroke-linecap="round"/><path d="M208,368 L262,410" fill="none" stroke="#000" stroke-width="16" /><path d="M238,385 L262,355" fill="none" stroke="#000" stroke-width="34" stroke-linecap="round"/><polygon points="230,556 282,612 218,674 156,620" fill="#000" /><polygon points="184,616 262,612 228,574" fill="#f4f5f7" /><path d="M232,545 V600" fill="none" stroke="#000" stroke-width="8" /><path d="M148,640 C162,664 174,676 174,689 A27,27 0 0 1 120,689 C120,676 134,664 148,640 Z" fill="#1e90ff" stroke="none" stroke-width="0" /></g>
<g transform="translate(0 486) scale(0.09229)"><path d="M118,226 V170 C150,165 165,130 180,105 C197,80 240,78 258,116 C240,106 220,116 222,136 C226,156 255,160 272,160 V226 Z" fill="#000" stroke="none" stroke-width="0" /><path d="M172,465 V415 Q172,395 195,392 H248 Q270,395 270,415 V465 Z" fill="#000" stroke="none" stroke-width="0" /><polygon points="198,388 208,366 240,366 250,388" fill="#000" /><rect x="212" y="325" width="28" height="21" fill="#000" /><circle cx="150" cy="325" r="7" fill="#9a9a9a" /><circle cx="128" cy="350" r="7" fill="#9a9a9a" /><circle cx="160" cy="352" r="7" fill="#9a9a9a" /><circle cx="145" cy="382" r="7" fill="#9a9a9a" /><circle cx="178" cy="335" r="7" fill="#9a9a9a" /><circle cx="172" cy="368" r="7" fill="#9a9a9a" /><polygon points="230,552 272,598 230,640 188,594" fill="#000" /><polygon points="180,612 212,644 178,678 144,644" fill="#8a8a8a" /><rect x="118" y="684" width="32" height="16" fill="#000" /><rect x="212" y="684" width="58" height="16" fill="#000" /></g>
<g transform="translate(0 550) scale(0.09229)"><path d="M120,118 C170,108 158,150 178,176 C190,194 205,198 225,198" fill="none" stroke="#000" stroke-width="16" /><polygon points="215,148 273,198 215,246" fill="#000" /><circle cx="195" cy="368" r="22" fill="none" stroke="#000" stroke-width="14"/><path d="M184,386 L148,490 M206,386 L242,490" fill="none" stroke="#000" stroke-width="17" /><path d="M120,438 H270" fill="none" stroke="#222" stroke-width="5" /><circle cx="195" cy="438" r="9" fill="#888" /></g>
<g transform="translate(0 608) scale(0.09229)"><circle cx="190" cy="168" r="62" fill="none" stroke="#000" stroke-width="16"/><path d="M238,215 L264,242" fill="none" stroke="#000" stroke-width="22" stroke-linecap="round"/><path d="M140,348 H210 Q240,348 240,378 V477 H140 Z" fill="none" stroke="#000" stroke-width="18" /><path d="M145,385 H192 M145,410 H178 M145,435 H192 M145,458 H178" fill="none" stroke="#000" stroke-width="9" /></g>
<g transform="translate(1036 100) scale(0.10054)"><path d="M160,125 H181 A65,65 0 0 1 181,255 H160" fill="none" stroke="#000" stroke-width="28" /><circle cx="133" cy="125" r="14" fill="#009a06" /><circle cx="133" cy="255" r="14" fill="#009a06" /><path d="M136,162 L106,177 L134,196 L102,214" fill="none" stroke="#000" stroke-width="12" /></g>
<g transform="translate(1036 144.9) scale(0.10054)"><path d="M160,125 H181 A65,65 0 0 1 181,255 H160" fill="none" stroke="#000" stroke-width="28" /><circle cx="133" cy="125" r="14" fill="#009a06" /><circle cx="133" cy="255" r="14" fill="#009a06" /><path d="M136,162 L106,177 L134,196 L102,214" fill="none" stroke="#000" stroke-width="12" /></g>
<g transform="translate(1036 314.0) scale(0.10054)"><path d="M160,125 H181 A65,65 0 0 1 181,255 H160" fill="none" stroke="#000" stroke-width="28" /><circle cx="133" cy="125" r="14" fill="#009a06" /><circle cx="133" cy="255" r="14" fill="#009a06" /><path d="M136,162 L106,177 L134,196 L102,214" fill="none" stroke="#000" stroke-width="12" /></g>
<g transform="translate(1036 514.0) scale(0.10054)"><path d="M160,125 H181 A65,65 0 0 1 181,255 H160" fill="none" stroke="#000" stroke-width="28" /><circle cx="133" cy="125" r="14" fill="#009a06" /><circle cx="133" cy="255" r="14" fill="#009a06" /><path d="M136,162 L106,177 L134,196 L102,214" fill="none" stroke="#000" stroke-width="12" /></g>
<g transform="translate(1036 176) scale(0.10054)"><rect x="140" y="110" width="78" height="20" fill="#82c985" /><rect x="140" y="250" width="78" height="20" fill="#82c985" /><rect x="100" y="150" width="20" height="78" fill="#82c985" /><rect x="240" y="150" width="20" height="78" fill="#82c985" /><rect x="100" y="110" width="20" height="20" fill="#cfd0d4" /><rect x="240" y="110" width="20" height="20" fill="#cfd0d4" /><rect x="100" y="250" width="20" height="20" fill="#cfd0d4" /><rect x="240" y="250" width="20" height="20" fill="#cfd0d4" /><rect x="100" y="420" width="30" height="30" fill="#82c985" /><rect x="230" y="420" width="30" height="30" fill="#82c985" /><rect x="100" y="548" width="30" height="30" fill="#82c985" /><rect x="230" y="548" width="30" height="30" fill="#82c985" /><rect x="150" y="420" width="60" height="18" fill="#cfd0d4" /><rect x="150" y="560" width="60" height="18" fill="#cfd0d4" /><rect x="100" y="468" width="20" height="60" fill="#cfd0d4" /><rect x="240" y="468" width="20" height="60" fill="#cfd0d4" /></g>
<g transform="translate(1036 240) scale(0.10054)"><rect x="100" y="90" width="20" height="20" fill="#cfd0d4" /><rect x="240" y="90" width="20" height="20" fill="#cfd0d4" /><rect x="100" y="230" width="20" height="20" fill="#cfd0d4" /><rect x="240" y="230" width="20" height="20" fill="#cfd0d4" /><rect x="170" y="90" width="20" height="40" fill="#82c985" /><rect x="170" y="210" width="20" height="40" fill="#82c985" /><rect x="100" y="160" width="40" height="20" fill="#82c985" /><rect x="220" y="160" width="40" height="20" fill="#82c985" /><rect x="100" y="400" width="40" height="18" fill="#cfd0d4" /><rect x="100" y="540" width="40" height="18" fill="#cfd0d4" /><rect x="160" y="400" width="40" height="18" fill="#cfd0d4" /><rect x="160" y="540" width="40" height="18" fill="#cfd0d4" /><rect x="220" y="400" width="40" height="18" fill="#cfd0d4" /><rect x="220" y="540" width="40" height="18" fill="#cfd0d4" /><rect x="100" y="400" width="20" height="38" fill="#cfd0d4" /><rect x="240" y="400" width="20" height="38" fill="#cfd0d4" /><rect x="100" y="460" width="20" height="38" fill="#cfd0d4" /><rect x="240" y="460" width="20" height="38" fill="#cfd0d4" /><rect x="100" y="520" width="20" height="38" fill="#cfd0d4" /><rect x="240" y="520" width="20" height="38" fill="#cfd0d4" /><rect x="140" y="468" width="80" height="20" fill="#82c985" /><rect x="170" y="438" width="20" height="80" fill="#82c985" /></g>
<g transform="translate(1036 340) scale(0.10054)"><path d="M110,205 H248" fill="none" stroke="#000" stroke-width="8" /><rect x="160" y="186" width="38" height="40" fill="#000" /><circle cx="115" cy="205" r="11" fill="#000" /><circle cx="243" cy="205" r="11" fill="#000" /><path d="M103,318 C103,270 120,245 150,232 M255,318 C255,270 238,245 208,232" fill="none" stroke="#009a06" stroke-width="9" /><path d="M105,620 L250,478 M108,520 L248,575" fill="none" stroke="#111" stroke-width="9" /><circle cx="180" cy="548" r="23" fill="#009a06" /></g>
<g transform="translate(1036 405) scale(0.10054)"><path d="M110,130 C170,135 218,170 205,236 M256,200 C256,226 240,243 215,250" fill="none" stroke="#111" stroke-width="9" /><polygon points="180,228 210,258 180,288 150,258" fill="#009a06" /><path d="M103,595 C103,550 125,520 150,508 M255,595 C255,550 233,520 208,508" fill="none" stroke="#111" stroke-width="10" /><circle cx="180" cy="495" r="23" fill="#009a06" /></g>
<g transform="translate(1036 468) scale(0.10054)"><path d="M130,150 V250" fill="none" stroke="#000" stroke-width="18" /><polygon points="98,157 162,157 130,120" fill="#000" /><polygon points="98,243 162,243 130,280" fill="#000" /><polygon points="148,170 148,230 196,200" fill="#000" /><path d="M233,120 V280" fill="none" stroke="#111" stroke-width="7" /><circle cx="233" cy="200" r="25" fill="#009a06" /></g>
<g transform="translate(1036 545) scale(0.10054)"><rect x="120" y="120" width="38" height="38" fill="#000" /><rect x="210" y="120" width="38" height="38" fill="#000" /><rect x="120" y="208" width="38" height="38" fill="#000" /><rect x="210" y="208" width="38" height="38" fill="#000" /><rect x="110" y="178" width="148" height="12" fill="#009a06" /><rect x="178" y="110" width="12" height="148" fill="#009a06" /><path d="M222,470 C222,428 170,420 150,446" fill="none" stroke="#009a06" stroke-width="16" /><polygon points="127,424 128,472 172,468" fill="#009a06" /><rect x="140" y="516" width="88" height="14" fill="#000" /><rect x="176" y="480" width="14" height="88" fill="#000" /></g>
<g transform="translate(1036 606) scale(0.13553)"><text x="108" y="165" font-family="Liberation Sans, sans-serif" font-weight="bold" font-size="104" fill="#000" textLength="84" lengthAdjust="spacingAndGlyphs">A</text><rect x="88" y="177" width="102" height="8" fill="#009a06" /><polygon points="95,164 113,182 95,200 77,182" fill="#009a06" /><polygon points="119,348 119,432 164,390" fill="#000" /><polygon points="193,592 193,675 151,633" fill="#000" /></g>
<g transform="translate(480 98) scale(0.06244)"><circle cx="200" cy="232" r="118" fill="#000" /><path d="M285,315 L322,350" fill="none" stroke="#000" stroke-width="44" stroke-linecap="round"/><text x="128" y="292" font-family="Liberation Sans, sans-serif" font-weight="bold" font-size="160" fill="#fff" stroke="#fff" stroke-width="3" textLength="144" lengthAdjust="spacingAndGlyphs">1:1</text><circle cx="585" cy="182" r="20" fill="#000" /><circle cx="408" cy="358" r="23" fill="#000" /><path d="M408,358 C402,290 470,212 585,182" fill="none" stroke="#000" stroke-width="20" /><path d="M428,300 C404,282 400,245 408,212 C425,235 440,262 428,300 Z M470,248 C492,238 512,205 514,170 C495,185 470,210 470,248 Z M440,312 C470,318 508,305 524,278 C495,275 465,285 440,312 Z M505,212 C522,222 542,226 556,226 C545,212 525,205 505,212 Z" fill="#000" stroke="#000" stroke-width="6" stroke-linejoin="round"/></g>
<g transform="translate(790 95) scale(0.12488)"><polygon points="505,112 582,112 560,136 482,136" fill="#1e8fe0" /><polygon points="520,150 598,150 576,177 497,177" fill="#0b3a5e" /><polygon points="535,190 610,190 590,215 512,215" fill="#000" /><path d="M722,355 H772 L798,382 V446 H722 Z" fill="none" stroke="#1400c8" stroke-width="16" /><polygon points="764,360 764,390 794,390" fill="#b43cc8" /><polygon points="562,355 562,447 608,401" fill="#9b9b9b" /></g>
<g transform="translate(853 156) scale(0.07330)"><polygon points="58,138 215,138 137,215" fill="#9b9b9b" /><path d="M370,98 H455 L505,150 V257 H370 Z" fill="none" stroke="#5b8acb" stroke-width="30" /><polygon points="440,108 440,165 495,165" fill="#8fb0dc" /><circle cx="612" cy="437" r="18" fill="none" stroke="#6a94cf" stroke-width="10"/><rect x="734" y="419" width="34" height="35" fill="none" stroke="#6a94cf" stroke-width="10"/><rect x="594" y="557" width="37" height="36" fill="none" stroke="#6a94cf" stroke-width="10"/><path d="M612,553 C612,480 660,440 730,437" fill="none" stroke="#6a94cf" stroke-width="10" /></g>
<g transform="translate(855 580) scale(0.16775)"><rect x="47" y="97" width="60" height="10" fill="#000" /><rect x="72" y="72" width="10" height="60" fill="#000" /><rect x="228" y="97" width="60" height="10" fill="#000" /><path d="M402,72 L436,105 L470,72 M400,125 H472" fill="none" stroke="#000" stroke-width="10" /><path d="M580,82 L614,115 L648,82" fill="none" stroke="#000" stroke-width="10" /><path d="M758,122 L793,88 L828,122" fill="none" stroke="#000" stroke-width="10" /><path d="M935,77 H1008 M938,128 L972,95 L1006,128" fill="none" stroke="#000" stroke-width="10" /></g>
<g transform="translate(920 215) scale(0.06244)"><path d="M245,195 V462 L312,402 L350,488 Q375,500 395,470 L365,395 H432 Z" fill="#fff" stroke="#000" stroke-width="15" stroke-linejoin="miter"/></g>
<g transform="translate(470 645) scale(0.06244)"><circle cx="368" cy="250" r="58" fill="#fff" stroke="#000" stroke-width="13"/><circle cx="302" cy="368" r="58" fill="#fff" stroke="#000" stroke-width="13"/><circle cx="302" cy="368" r="38" fill="#009a06" /><circle cx="432" cy="368" r="58" fill="#fff" stroke="#000" stroke-width="13"/><circle cx="432" cy="368" r="38" fill="#ff1493" /><rect x="355" y="345" width="25" height="45" fill="#000" /></g>
<g transform="translate(90.6 341.5) rotate(0)"><polygon points="-7.7,0 -2.7,-4.5 -2.7,-2.3 2.7,-2.3 2.7,-4.5 7.7,0 2.7,4.5 2.7,2.3 -2.7,2.3 -2.7,4.5" fill="#000" /></g>
<g transform="translate(390.8 341.5) rotate(0)"><polygon points="-7.7,0 -2.7,-4.5 -2.7,-2.3 2.7,-2.3 2.7,-4.5 7.7,0 2.7,4.5 2.7,2.3 -2.7,2.3 -2.7,4.5" fill="#000" /></g>
<g transform="translate(240.6 200.5) rotate(90)"><polygon points="-7.7,0 -2.7,-4.5 -2.7,-2.3 2.7,-2.3 2.7,-4.5 7.7,0 2.7,4.5 2.7,2.3 -2.7,2.3 -2.7,4.5" fill="#000" /></g>
<g transform="translate(240.5 482.4) rotate(90)"><polygon points="-7.7,0 -2.7,-4.5 -2.7,-2.3 2.7,-2.3 2.7,-4.5 7.7,0 2.7,4.5 2.7,2.3 -2.7,2.3 -2.7,4.5" fill="#000" /></g>
<g transform="translate(93.6 203.5) rotate(45)"><polygon points="-7.8,0 -2.8,-4.5 -2.8,-2.3 2.8,-2.3 2.8,-4.5 7.8,0 2.8,4.5 2.8,2.3 -2.8,2.3 -2.8,4.5" fill="#000" /></g>
<g transform="translate(388.5 203.4) rotate(-45)"><polygon points="-7.8,0 -2.8,-4.5 -2.8,-2.3 2.8,-2.3 2.8,-4.5 7.8,0 2.8,4.5 2.8,2.3 -2.8,2.3 -2.8,4.5" fill="#000" /></g>
<g transform="translate(388.5 479.5) rotate(45)"><polygon points="-7.8,0 -2.8,-4.5 -2.8,-2.3 2.8,-2.3 2.8,-4.5 7.8,0 2.8,4.5 2.8,2.3 -2.8,2.3 -2.8,4.5" fill="#000" /></g>
<g transform="translate(80 460) scale(0.05427)"><polygon points="150,345 150,458 265,458" fill="#000" /><path d="M195,412 L300,305" fill="none" stroke="#000" stroke-width="82" /><polygon points="360,145 462,245 340,365 235,265" fill="#000" /><polygon points="275,265 352,250 340,330" fill="#fff" /></g></svg>
</body></html>
